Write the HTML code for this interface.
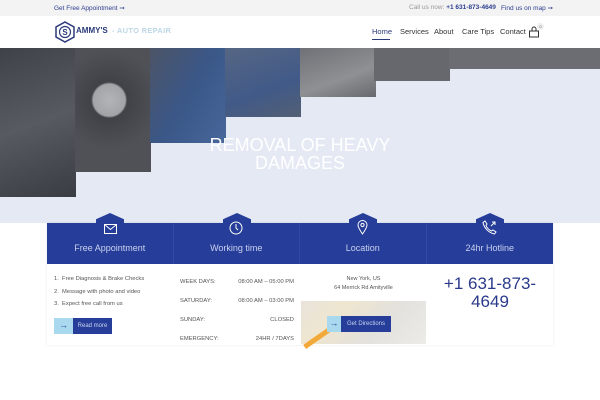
<!DOCTYPE html>
<html><head><style>
*{margin:0;padding:0;box-sizing:border-box}
body{width:600px;height:400px;overflow:hidden;background:#fff;font-family:"Liberation Sans",sans-serif;position:relative}
.a{position:absolute}
.top{left:0;top:0;width:600px;height:16px;background:#f3f3f3;font-size:6.5px;color:#2b3d8f}
.nav{left:0;top:16px;width:600px;height:32px;background:#fff}
.nl{font-size:7.5px;color:#333;top:11px}
.col{top:48px;width:76px}
.card{left:47px;top:223px;width:506px;height:122px;background:#fff;box-shadow:0 0 2px rgba(0,0,0,.12)}
.hd{top:0;height:41px;width:126.5px;background:#263d99;color:#c9d3f0;font-size:9px;text-align:center;padding-top:20px;border-right:1px solid #34489f}
.hex{top:-10px;width:28px;height:18px;background:#263d99;clip-path:polygon(50% 0,100% 35%,100% 100%,0 100%,0 35%)}
.t{font-size:5.8px;color:#555}
</style></head><body>
<div class="a top">
 <span class="a" style="left:54px;top:4px">Get Free Appointment ➞</span>
 <span class="a" style="left:409px;top:4px;color:#999">Call us now: <b style="color:#2b3d8f">+1 631-873-4649</b></span>
 <span class="a" style="left:493px;top:3px;color:#ccc">|</span>
 <span class="a" style="left:501px;top:4px">Find us on map ➞</span>
</div>
<div class="a nav">
 <svg class="a" style="left:55px;top:5px" width="20" height="22" viewBox="0 0 20 22"><polygon points="10,1 19,6 19,16 10,21 1,16 1,6" fill="none" stroke="#2a3a7a" stroke-width="1.5"/><circle cx="10" cy="11" r="5.5" fill="none" stroke="#2a3a7a" stroke-width="1.2"/><text x="10" y="14" font-size="8" font-weight="bold" text-anchor="middle" fill="#2a3a7a" font-family="Liberation Sans">S</text></svg>
 <span class="a" style="left:76px;top:10px;font-size:8px;font-weight:bold;color:#2a3a7a">AMMY'S</span>
 <span class="a" style="left:112px;top:10px;font-size:7.5px;font-weight:bold;color:#bcd7e6;letter-spacing:.3px">- AUTO REPAIR</span>
 <span class="a nl" style="left:372px;color:#2a3a7a">Home</span>
 <div class="a" style="left:372px;top:23px;width:18px;height:1px;background:#2a3a7a"></div>
 <span class="a nl" style="left:400px">Services</span>
 <span class="a nl" style="left:434px">About</span>
 <span class="a nl" style="left:462px">Care Tips</span>
 <span class="a nl" style="left:500px">Contact</span>
 <svg class="a" style="left:528px;top:10px" width="12" height="12" viewBox="0 0 12 12"><rect x="1.5" y="5" width="9" height="6" fill="none" stroke="#333"/><path d="M4 5V3a2 2 0 0 1 4 0v2" fill="none" stroke="#333"/></svg>
 <div class="a" style="left:537px;top:7px;width:7px;height:7px;border-radius:50%;background:#eee;font-size:4px;text-align:center;line-height:7px;color:#666">0</div>
</div>
<div class="a" style="left:0;top:48px;width:600px;height:175px;background:#e4e9f3"></div>
<div class="a col" style="left:0;height:149px;background:linear-gradient(160deg,#3f4249,#585a62 50%,#3a3c43)"></div>
<div class="a col" style="left:75px;height:124px;background:radial-gradient(circle at 45% 42%,#b2b4b8 0,#a2a4a8 16px,#404248 18px,#4f5157 60%)"></div>
<div class="a col" style="left:150px;height:95px;background:linear-gradient(120deg,#4c5466,#3a5788 50%,#48679a)"></div>
<div class="a col" style="left:225px;height:69px;background:linear-gradient(160deg,#566684,#415a88 60%,#535f74)"></div>
<div class="a col" style="left:300px;height:49px;background:linear-gradient(160deg,#6f7176,#8e9094 60%,#67696e)"></div>
<div class="a col" style="left:374px;height:33px;background:#66686e"></div>
<div class="a" style="left:449px;top:48px;width:151px;height:21px;background:#6b6d72"></div>
<div class="a" style="left:190px;top:136px;width:220px;text-align:center;color:#fff;font-size:18px;line-height:18px">REMOVAL OF HEAVY<br>DAMAGES</div>

<div class="a card">
 <div class="a hex" style="left:49px"></div><div class="a hex" style="left:176px"></div><div class="a hex" style="left:302px"></div><div class="a hex" style="left:429px"></div>
 <div class="a hd" style="left:0">Free Appointment</div>
 <div class="a hd" style="left:126.5px">Working time</div>
 <div class="a hd" style="left:253px">Location</div>
 <div class="a hd" style="left:379.5px;border:0">24hr Hotline</div>
 <svg class="a" style="left:57px;top:1px" width="13" height="10" viewBox="0 0 13 10"><rect x=".5" y=".5" width="12" height="9" fill="none" stroke="#fff"/><path d="M.5 .5 6.5 5.5 12.5 .5" fill="none" stroke="#fff"/></svg>
 <svg class="a" style="left:182px;top:-2px" width="14" height="14" viewBox="0 0 14 14"><circle cx="7" cy="7" r="6" fill="none" stroke="#fff"/><path d="M7 3v4l2 2" fill="none" stroke="#fff"/></svg>
 <svg class="a" style="left:310px;top:-3px" width="11" height="15" viewBox="0 0 11 15"><path d="M5.5 14C2 9 1 7 1 5a4.5 4.5 0 0 1 9 0c0 2-1 4-4.5 9z" fill="none" stroke="#fff"/><circle cx="5.5" cy="5" r="1.6" fill="none" stroke="#fff"/></svg>
 <svg class="a" style="left:435px;top:-3px" width="15" height="15" viewBox="0 0 15 15"><path d="M3 1 5 4 4 5.5C5 8 7 10 9.5 11L11 10l3 2-1.5 2C7 13 2 8 1 2.5z" fill="none" stroke="#fff"/><path d="M9 6 13 2M10 2h3v3" fill="none" stroke="#fff"/></svg>
 <div class="a t" style="left:7px;top:50px;line-height:12.5px">1.&nbsp; Free Diagnosis &amp; Brake Checks<br>2.&nbsp; Message with photo and video<br>3.&nbsp; Expect free call from us</div>
 <div class="a" style="left:7px;top:95px;width:19px;height:16px;background:#a9d9ef;color:#2a3a9a;font-size:9px;text-align:center;line-height:15px">→</div>
 <div class="a" style="left:26px;top:95px;width:39px;height:16px;background:#263d99;color:#c9d3f0;font-size:6px;text-align:center;line-height:16px">Read more</div>
 <div class="a t" style="left:133px;top:50px;width:114px;line-height:19px">WEEK DAYS:<span style="float:right">08:00 AM – 05:00 PM</span><br>SATURDAY:<span style="float:right">08:00 AM – 03:00 PM</span><br>SUNDAY:<span style="float:right">CLOSED</span><br>EMERGENCY:<span style="float:right">24HR / 7DAYS</span></div>
 <div class="a t" style="left:253px;top:52px;width:127px;text-align:center;line-height:9px;font-size:5.5px">New York, US<br>64 Merrick Rd Amityville</div>
 <div class="a" style="left:254px;top:78px;width:125px;height:43px;background:linear-gradient(135deg,#e8e4dc 0,#efe6cf 30%,#e3e1dc 60%,#ecebe8)"></div>
 <div class="a" style="left:254px;top:110px;width:40px;height:5px;background:#f2a93a;transform:rotate(-35deg)"></div>
 <div class="a" style="left:280px;top:93px;width:14px;height:16px;background:#a9d9ef;color:#2a3a9a;font-size:9px;text-align:center;line-height:15px">→</div>
 <div class="a" style="left:294px;top:93px;width:50px;height:16px;background:#263d99;color:#c9d3f0;font-size:6px;text-align:center;line-height:16px">Get Directions</div>
 <div class="a" style="left:380px;top:52px;width:126px;text-align:center;color:#2a3a8a;font-size:17px;line-height:18px">+1 631-873-<br>4649</div>
</div>
</body></html>
